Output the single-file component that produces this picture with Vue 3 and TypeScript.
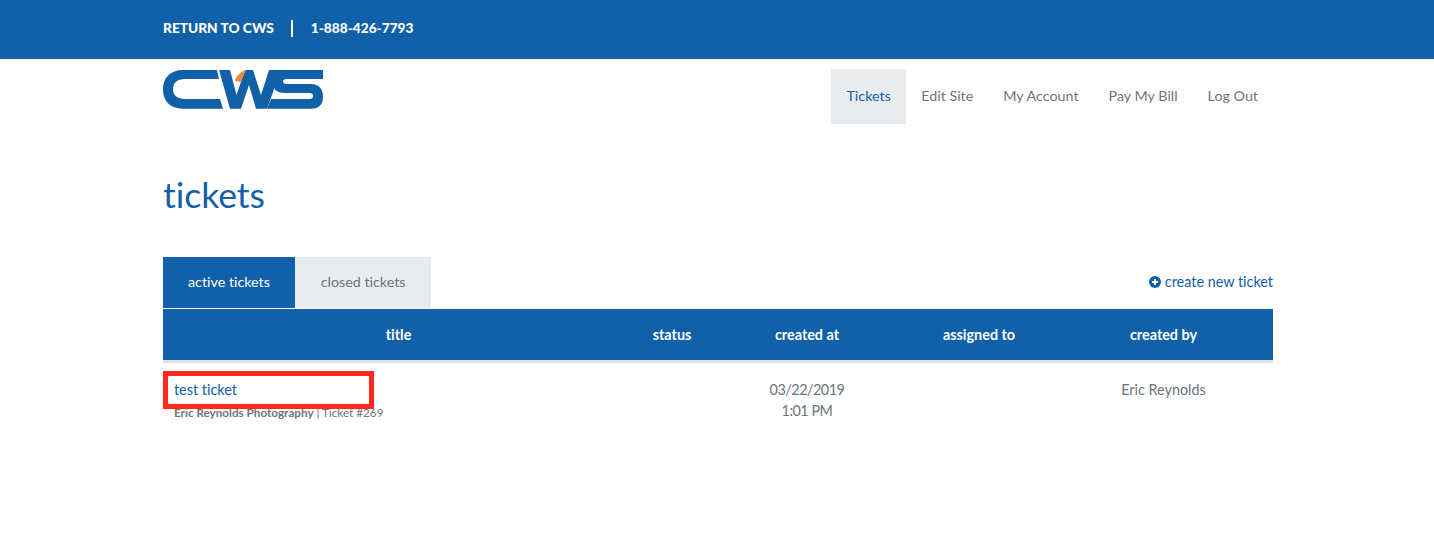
<script setup lang="ts">
type NavItem = { label: string; active?: boolean }

const navItems: NavItem[] = [
  { label: "Tickets", active: true },
  { label: "Edit Site" },
  { label: "My Account" },
  { label: "Pay My Bill" },
  { label: "Log Out" }
]

const columns = ["title", "status", "created at", "assigned to", "created by"]
</script>

<template>
  <div class="top-bar">
    <div class="wrap top-links">
      <span class="top-link">RETURN TO CWS</span>
      <span class="top-divider"></span>
      <span class="top-link">1-888-426-7793</span>
    </div>
  </div>

  <div class="wrap header">
    <svg class="logo" viewBox="0 0 160 39" width="160" height="39" aria-label="CWS">
      <path fill="#1160aa" d="M20 0H54L56 9H22C14 9 10 13 10 19.500C10 25 14 29 22 29H57L60 38.700H20C7 38.700 0 31 0 19.500C0 8 7 0 20 0Z" />
      <path fill="#1160aa" d="M56 0H67L73.500 25L82 0H90L98 25L106 0H118L104 38.700H93L86 15L78 38.700H67Z" />
      <path fill="#f08a3c" d="M72 11C73 6 77 2 83 0L78 12Z" />
      <path fill="#1160aa" d="M118 0H160V9H124C121 9 120 10 120 11.500C120 13 121 14 124 14H148C156 14 160 19 160 26.500C160 34.500 156 38.700 148 38.700H104L108 29H146C149 29 150 28 150 26C150 24 149 23 146 23H122C113 23 110 19 110 12C110 5 113 0 118 0Z" />
    </svg>
    <nav class="nav">
      <a v-for="item in navItems" :key="item.label" class="nav-item" :class="{ active: item.active }">{{ item.label }}</a>
    </nav>
  </div>

  <div class="wrap">
    <h1 class="page-title">tickets</h1>

    <div class="tabs-row">
      <div class="tabs">
        <div class="tab active">active tickets</div>
        <div class="tab">closed tickets</div>
      </div>
      <a class="create-link">
        <svg viewBox="0 0 12 12" width="12" height="12">
          <circle cx="6" cy="6" r="6" fill="#1160aa" />
          <path d="M6 3V9M3 6H9" stroke="#fff" stroke-width="2" />
        </svg>
        create new ticket
      </a>
    </div>

    <div class="table-grid table-head">
      <div v-for="col in columns" :key="col">{{ col }}</div>
    </div>

    <div class="table-grid table-row">
      <div class="title-cell">
        <a class="ticket-link">test ticket</a>
        <div class="ticket-meta"><b>Eric Reynolds Photography</b> | Ticket #269</div>
        <div class="highlight"></div>
      </div>
      <div></div>
      <div class="date-cell">03/22/2019<br />1:01 PM</div>
      <div></div>
      <div>Eric Reynolds</div>
    </div>
  </div>
</template>

<style scoped>
.wrap {
  width: 1110px;
  margin-left: 163px;
}

.top-bar {
  background: #1160aa;
  height: 59px;
}

.top-links {
  display: flex;
  align-items: center;
  height: 57px;
}

.top-link {
  color: #fff;
  font-size: 13.700px;
  font-weight: 900;
  padding-bottom: 2px;
}

.top-divider {
  width: 2px;
  height: 17px;
  background: #fff;
  margin: 0 18px 0 17px;
}

.header {
  display: flex;
  justify-content: space-between;
  align-items: flex-start;
  height: 65px;
}

.logo {
  margin-top: 11px;
}

.nav {
  display: flex;
  margin-top: 10px;
}

.nav-item {
  height: 55px;
  line-height: 54px;
  padding: 0 15px;
  font-size: 14.300px;
  color: #6c757d;
}

.nav-item.active {
  background: #e9ecef;
  color: #1160aa;
  padding: 0 15.500px;
}

.page-title {
  margin: 50px 0 0;
  font-size: 35.500px;
  line-height: 42px;
  font-weight: 400;
  color: #1160aa;
}

.tabs-row {
  display: flex;
  justify-content: space-between;
  align-items: center;
  margin-top: 41px;
}

.tabs {
  display: flex;
}

.tab {
  height: 51px;
  line-height: 50px;
  padding: 0 25.800px;
  font-size: 14.300px;
  background: #e9ecef;
  color: #6c757d;
}

.tab.active {
  background: #1160aa;
  color: #fff;
  padding: 0 25px;
}

.create-link {
  display: flex;
  align-items: center;
  gap: 4px;
  font-size: 14.400px;
  line-height: 18px;
  margin-top: -1px;
  color: #1160aa;
}

.table-grid {
  display: grid;
  grid-template-columns: 471px 76px 194px 150px 219px;
  text-align: center;
  font-size: 14.400px;
}

.table-head {
  margin-top: 1px;
  height: 51px;
  line-height: 51px;
  background: #1160aa;
  color: #fff;
  font-weight: 700;
  border-bottom: 3px solid #dee2e6;
  box-sizing: content-box;
}

.table-row {
  padding-top: 16px;
  color: #6c757d;
  line-height: 21px;
}

.title-cell {
  position: relative;
  text-align: left;
  padding-left: 11px;
}

.ticket-link {
  color: #1160aa;
}

.ticket-meta {
  font-size: 11.700px;
  line-height: 14px;
  margin-top: 5px;
}

.date-cell {
  letter-spacing: -0.500px;
}

.highlight {
  position: absolute;
  left: 0;
  top: -8px;
  width: 211px;
  height: 38px;
  box-sizing: border-box;
  border: 5px solid #ff2a1c;
}
</style>

<style>
body {
  font-family: "Lato", "Noto Sans", sans-serif;
  font-variant-ligatures: none;
  background: #fff;
}
</style>
